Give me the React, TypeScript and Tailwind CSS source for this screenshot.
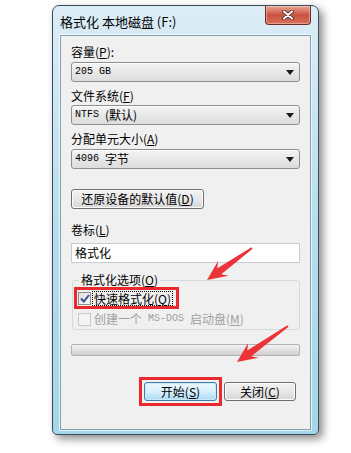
import React from "react";

const cjk = "font-['Noto_Sans_CJK_SC','Noto_Sans',sans-serif]";
const mono = "font-['Liberation_Mono',monospace] text-[10px]";

function Caret() {
  return (
    <svg width="8" height="5" viewBox="0 0 8 5" className="shrink-0">
      <path d="M0 0h8L4 5z" fill="#1a1a1a" />
    </svg>
  );
}

function Select({ children }: { children: React.ReactNode }) {
  return (
    <div className="flex h-[20px] w-[229px] items-center justify-between rounded-[3px] border border-[#8e8f8f] bg-gradient-to-b from-[#f4f4f4] to-[#dcdcdc] pl-[3px] pr-[5px] shadow-[inset_0_1px_0_#fff]">
      <div className="flex items-center text-[12px] leading-none text-black">{children}</div>
      <Caret />
    </div>
  );
}

function Label({ children, className = "" }: { children: React.ReactNode; className?: string }) {
  return <div className={"h-[16px] text-[12px] leading-[16px] text-black " + className}>{children}</div>;
}

function Check({ checked, disabled }: { checked?: boolean; disabled?: boolean }) {
  return (
    <div
      className={
        "flex h-[13px] w-[13px] shrink-0 items-center justify-center border " +
        (disabled ? "border-[#c9c9c9] bg-[#f4f4f4]" : "border-[#8f8f8f] bg-gradient-to-br from-[#dcdcdc] to-[#fbfbfb]")
      }
    >
      {checked && (
        <svg width="10" height="9" viewBox="0 0 10 9">
          <path d="M1 4.5 3.8 7.5 9 1" fill="none" stroke="#3a4f8f" strokeWidth="2" />
        </svg>
      )}
    </div>
  );
}

function Arrow({ x1, y1, x2, y2 }: { x1: number; y1: number; x2: number; y2: number }) {
  const len = Math.hypot(x2 - x1, y2 - y1);
  const ux = (x2 - x1) / len;
  const uy = (y2 - y1) / len;
  const nx = -uy;
  const ny = ux;
  const p = (d: number, w: number) => `${x2 - ux * d + nx * w},${y2 - uy * d + ny * w}`;
  const pts = [
    `${x2},${y2}`,
    p(20, 9),
    p(15, 3.5),
    `${x1 + nx * 1},${y1 + ny * 1}`,
    `${x1 - nx * 1},${y1 - ny * 1}`,
    p(15, -3.5),
    p(20, -9),
  ].join(" ");
  return <polygon points={pts} fill="#ec3337" />;
}

export default function App() {
  return (
    <div className={"relative h-[453px] w-[351px] overflow-hidden bg-white " + cjk}>
      <div className="ml-[52px] mt-[5px] flex h-[430px] w-[267px] flex-col rounded-t-[7px] rounded-b-[5px] border border-[#3c4c58] bg-gradient-to-b from-[#dcedf6] via-[#b7deed] to-[#a3d6e8] px-[7px] pb-[4px] shadow-[4px_4px_9px_rgba(0,0,0,0.45)]">
        <div className="flex h-[29px] items-start justify-between">
          <div className="pt-[8px] text-[13px] leading-[16px] text-black">格式化 本地磁盘 (F:)</div>
          <div className="flex h-[19px] w-[46px] items-center justify-center rounded-b-[4px] border border-t-0 border-[#6b2b24] bg-gradient-to-b from-[#e8a493] via-[#c9513f] to-[#d7725d] shadow-[inset_0_0_0_1px_rgba(255,255,255,0.35)]">
            <svg width="12" height="10" viewBox="0 0 12 10">
              <path d="M2 1.5 10 8.5M10 1.5 2 8.5" stroke="#3d1a14" strokeWidth="3.6" strokeLinecap="round" />
              <path d="M2 1.5 10 8.5M10 1.5 2 8.5" stroke="#fff" strokeWidth="2.2" strokeLinecap="round" />
            </svg>
          </div>
        </div>

        <div className="flex flex-1 flex-col border border-[#7f9fb3] bg-[#f0f0f0] pl-[10px] shadow-[0_0_0_1px_rgba(255,255,255,0.7)]">
          <Label className="mt-[8px]">容量(<u>P</u>):</Label>
          <div className="mt-[2px]">
            <Select>
              <span className={mono}>205 GB</span>
            </Select>
          </div>

          <Label className="mt-[6px]">文件系统(<u>F</u>)</Label>
          <div className="mt-[1px]">
            <Select>
              <span className={mono}>NTFS</span>
              <span className="ml-[6px]">(默认)</span>
            </Select>
          </div>

          <Label className="mt-[6px]">分配单元大小(<u>A</u>)</Label>
          <div className="mt-[2px]">
            <Select>
              <span className={mono}>4096</span>
              <span className="ml-[6px]">字节</span>
            </Select>
          </div>

          <div className="mt-[20px] flex h-[20px] w-[133px] items-center justify-center rounded-[3px] border border-[#707070] bg-gradient-to-b from-[#f2f2f2] via-[#e8e8e8] to-[#d6d6d6] text-[12px] leading-none text-black shadow-[inset_0_0_0_1px_#fcfcfc]">
            还原设备的默认值(<u>D</u>)
          </div>

          <Label className="mt-[13px]">卷标(<u>L</u>)</Label>
          <div className="mt-[5px] flex h-[20px] w-[229px] items-center border border-[#c8cbd0] bg-white pl-[3px] text-[12px] leading-none text-black">
            格式化
          </div>

          <fieldset className="ml-[1px] mt-[9px] h-[58px] w-[228px] rounded-[3px] border border-[#d3d9de] px-[6px]">
            <legend className="px-[2px] text-[12px] leading-[16px] text-black">
              格式化选项(<u>O</u>)
            </legend>
            <div className="-ml-[5px] -mt-[1px] flex h-[22px] w-[105px] items-center border-[3px] border-[#e8292e] pl-[1px]">
              <Check checked />
              <span className="ml-[1px] border border-dotted border-black px-[1px] text-[12px] leading-[13px] text-black">
                快速格式化(<u>Q</u>)
              </span>
            </div>
            <div className="-ml-[1px] mt-[3px] flex items-center">
              <Check disabled />
              <span className="ml-[3px] flex items-center text-[12px] leading-[14px] text-[#a0a0a0]">
                创建一个<span className={mono + " ml-[6px]"}>MS-DOS</span>
                <span className="ml-[6px]">启动盘(<u>M</u>)</span>
              </span>
            </div>
          </fieldset>

          <div className="mt-[14px] h-[12px] w-[229px] rounded-[2px] border border-[#b2b2b2] bg-gradient-to-b from-[#f3f3f3] via-[#e2e2e2] to-[#cfcfcf]" />

          <div className="mr-[14px] mt-[21px] flex items-center justify-end gap-[2px]">
            <div className="border-[3px] border-[#e8292e] p-[2px]">
              <div className="flex h-[19px] w-[73px] items-center justify-center rounded-[3px] border border-[#3c7fb1] bg-gradient-to-b from-[#eaf6fd] via-[#d9f0fc] to-[#a7d9f5] text-[12px] leading-none text-black shadow-[inset_0_0_0_1px_#cde9f8]">
                开始(<u>S</u>)
              </div>
            </div>
            <div className="flex h-[19px] w-[72px] items-center justify-center rounded-[3px] border border-[#707070] bg-gradient-to-b from-[#f2f2f2] via-[#e8e8e8] to-[#d6d6d6] text-[12px] leading-none text-black shadow-[inset_0_0_0_1px_#fcfcfc]">
              关闭(<u>C</u>)
            </div>
          </div>
        </div>
      </div>

      <svg className="pointer-events-none absolute left-0 top-0" width="351" height="453">
        <Arrow x1={252} y1={248} x2={207} y2={280} />
        <Arrow x1={288} y1={326} x2={237} y2={362} />
      </svg>
    </div>
  );
}
